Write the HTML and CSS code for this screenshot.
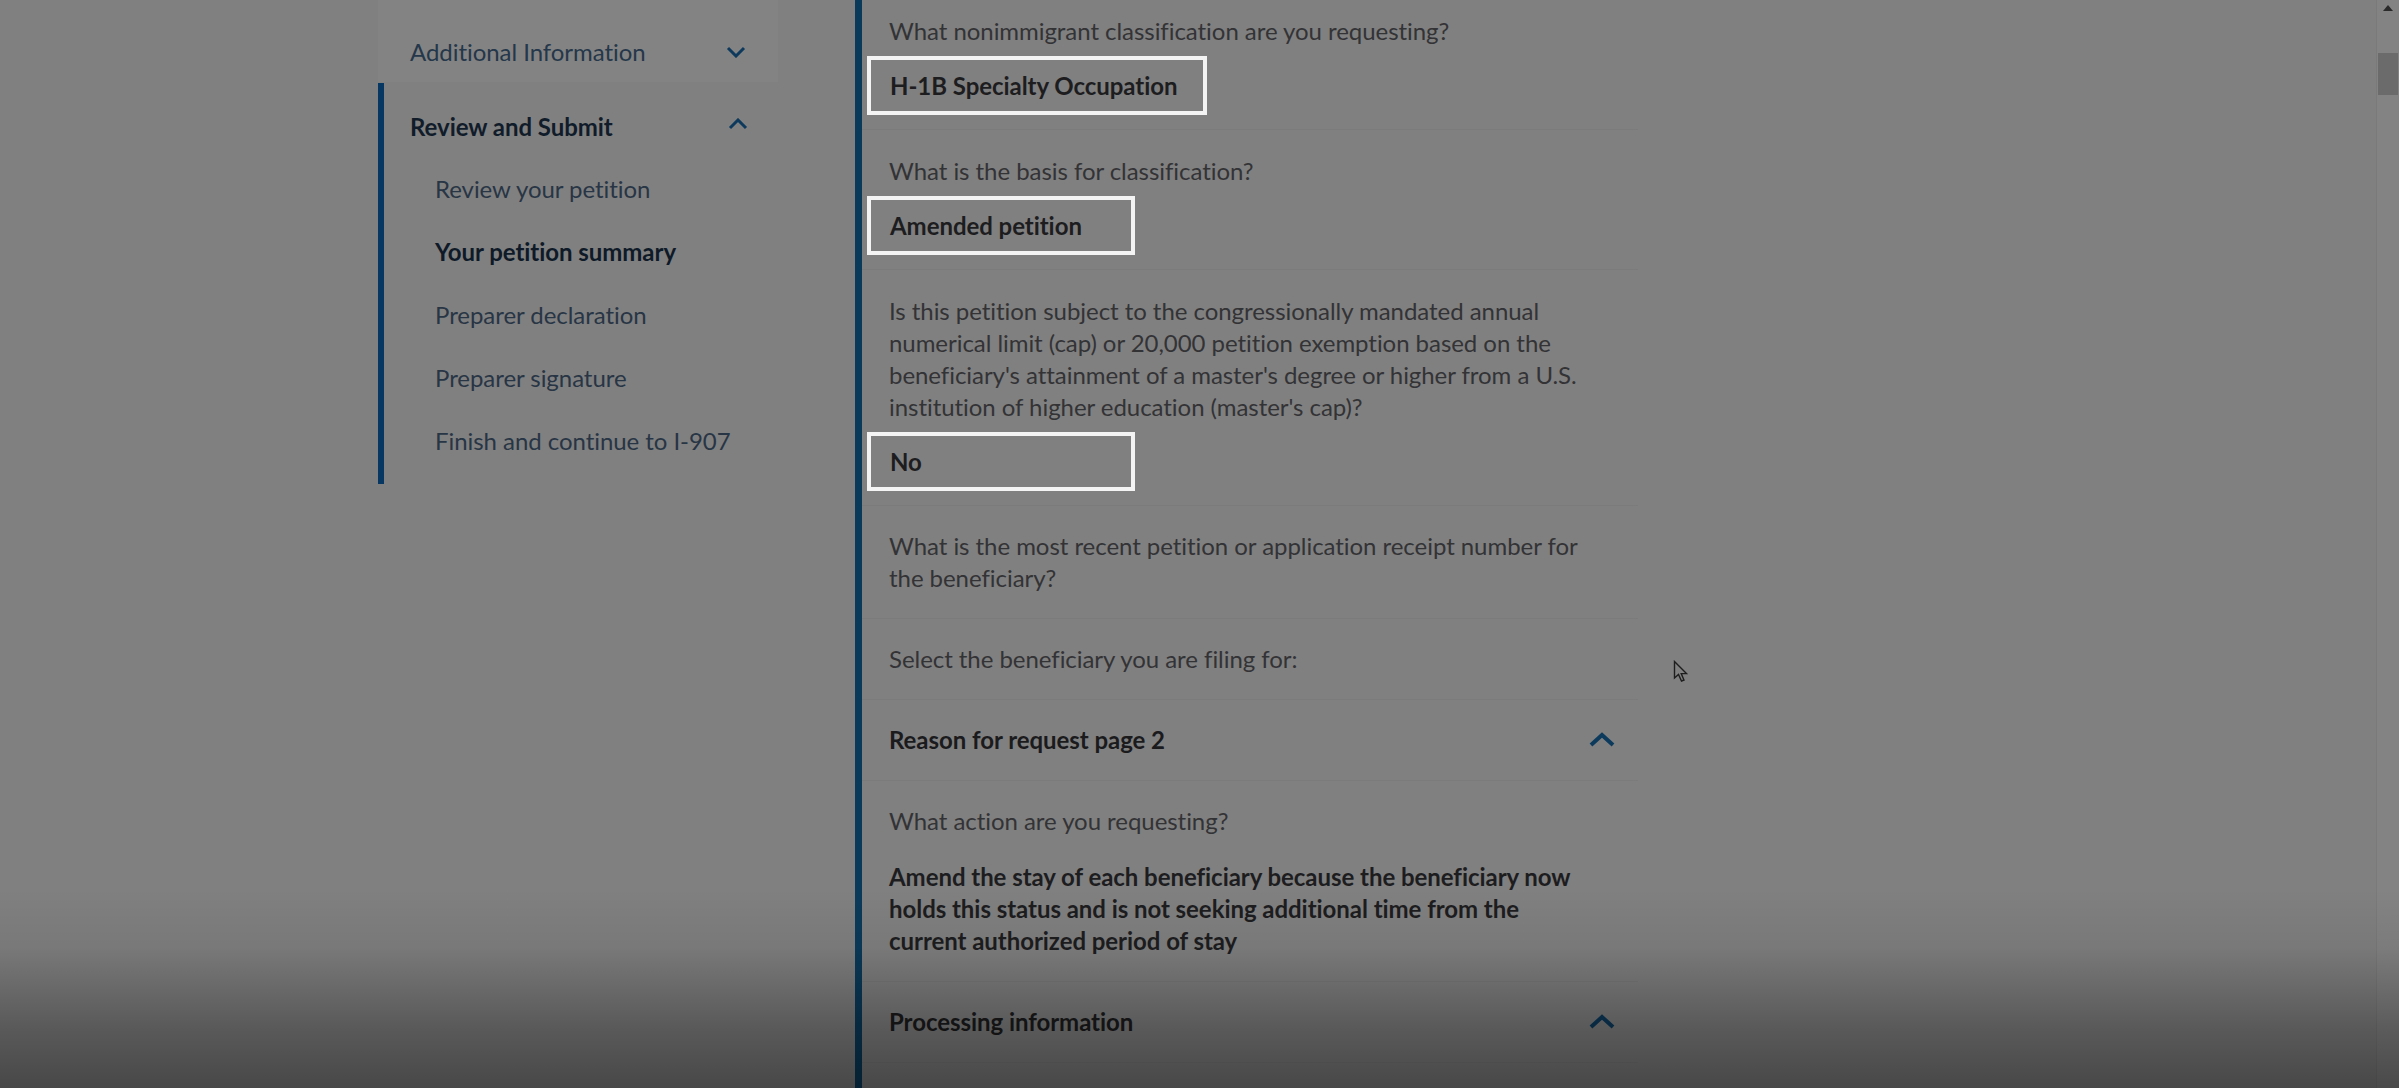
FILE: index.html
```html
<!DOCTYPE html>
<html lang="en">
<head>
    <meta charset="UTF-8">
    <meta name="viewport" content="width=device-width, initial-scale=1.0">
    <title>Your petition summary</title>
    <link rel="stylesheet" href="styles.css">
</head>
<body>
    <div class="page">
        <aside class="sidenav">
            <div class="nav-collapsed">
                <span>Additional Information</span>
                <svg class="nav-chevron" viewBox="0 0 20 12"><path d="M2 2 L10 10 L18 2"/></svg>
            </div>
            <div class="nav-open">
                <div class="nav-head">
                    <span>Review and Submit</span>
                    <svg class="nav-chevron up" viewBox="0 0 20 12"><path d="M2 10 L10 2 L18 10"/></svg>
                </div>
                <ul class="nav-items">
                    <li>Review your petition</li>
                    <li class="current">Your petition summary</li>
                    <li>Preparer declaration</li>
                    <li>Preparer signature</li>
                    <li>Finish and continue to I-907</li>
                </ul>
            </div>
        </aside>

        <main class="summary">
            <div class="field first">
                <p class="q">What nonimmigrant classification are you requesting?</p>
                <div class="answer wide">H-1B Specialty Occupation</div>
            </div>
            <div class="field">
                <p class="q">What is the basis for classification?</p>
                <div class="answer">Amended petition</div>
            </div>
            <div class="field">
                <p class="q">Is this petition subject to the congressionally mandated annual<br>numerical limit (cap) or 20,000 petition exemption based on the<br>beneficiary's attainment of a master's degree or higher from a U.S.<br>institution of higher education (master's cap)?</p>
                <div class="answer">No</div>
            </div>
            <div class="field plain">
                <p class="q">What is the most recent petition or application receipt number for<br>the beneficiary?</p>
            </div>
            <div class="field plain">
                <p class="q">Select the beneficiary you are filing for:</p>
            </div>

            <div class="section-head">
                <span>Reason for request page 2</span>
                <svg class="chevron" viewBox="0 0 28 16"><path d="M3 13 L14 3 L25 13"/></svg>
            </div>
            <div class="field plain">
                <p class="q">What action are you requesting?</p>
                <p class="value">Amend the stay of each beneficiary because the beneficiary now<br>holds this status and is not seeking additional time from the<br>current authorized period of stay</p>
            </div>

            <div class="section-head">
                <span>Processing information</span>
                <svg class="chevron" viewBox="0 0 28 16"><path d="M3 13 L14 3 L25 13"/></svg>
            </div>
        </main>
    </div>

    <!-- video overlay bits -->
    <div class="scrollbar">
        <div class="scroll-up"></div>
        <div class="scroll-thumb"></div>
    </div>
    <svg class="cursor" viewBox="0 0 16 24"><path d="M1.5 1.5 L1.5 18 L5.5 14.5 L8.5 21 L11 20 L8.2 13.6 L13.5 13.6 Z"/></svg>
    <div class="fade"></div>
</body>
</html>
```

FILE: styles.css
```css
body {
    margin: 0;
    height: 1088px;
    overflow: hidden;
    position: relative;
    background-color: #808080;
    font-family: Lato, "Open Sans", sans-serif;
    font-size: 24px;
    letter-spacing: -0.05px;
    color: #333336;
}
.page {
    display: flex;
    gap: 75px;
    padding-left: 378px;
}
/* Side navigation */
.sidenav {
    width: 402px;
    flex-shrink: 0;
}
.nav-collapsed {
    width: 400px;
    height: 82px;
    box-sizing: border-box;
    padding: 36px 32px 14px 32px;
    display: flex;
    justify-content: space-between;
    align-items: flex-start;
    line-height: 32px;
    background-color: #838383;
    color: #25374a;
}
.nav-chevron {
    width: 20px;
    height: 12px;
    margin-top: 10px;
    fill: none;
    stroke: #0d3a5c;
    stroke-width: 3;
}
.nav-chevron.up {
    margin-top: 0;
    margin-bottom: 6px;
}
.nav-open {
    margin-top: 1px;
    border-left: 6px solid #063763;
    padding-bottom: 11px;
}
.nav-head {
    display: flex;
    justify-content: space-between;
    align-items: center;
    padding: 28px 32px 15px 26px;
    line-height: 32px;
    font-weight: 700;
    color: #111c2a;
}
.nav-items {
    list-style: none;
    margin: 0;
    padding: 0;
}
.nav-items li {
    padding: 15px 0 16px 51px;
    line-height: 32px;
    color: #283545;
}
.nav-items li.current {
    font-weight: 700;
    color: #0f1a28;
}
/* Summary column */
.summary {
    width: 776px;
    flex-shrink: 0;
    border-left: 7px solid #0a3a5a;
    min-height: 1088px;
}
.field {
    padding: 25px 27px 14px;
    border-bottom: 1px solid #7b7b7b;
}
.field.first {
    padding-top: 15px;
}
.field.plain {
    padding-top: 24px;
    padding-bottom: 24px;
}
.q {
    margin: 0;
    line-height: 32px;
}
.answer {
    margin: 9px 0 0 -22px;
    width: 268px;
    height: 59px;
    box-sizing: border-box;
    border: 4px solid #f4f4f4;
    padding-left: 19px;
    display: flex;
    align-items: center;
    font-weight: 700;
    color: #1d1d1f;
}
.answer.wide {
    width: 340px;
}
.value {
    margin: 24px 0 0;
    line-height: 32px;
    font-weight: 700;
    color: #1d1d1f;
}
.section-head {
    display: flex;
    justify-content: space-between;
    align-items: center;
    padding: 24px 22px 24px 27px;
    line-height: 32px;
    font-weight: 700;
    color: #1b1b1d;
    border-bottom: 1px solid #7b7b7b;
}
.chevron {
    width: 28px;
    height: 16px;
    fill: none;
    stroke: #0c3a5c;
    stroke-width: 4;
}
/* Overlays from the recording */
.scrollbar {
    position: absolute;
    top: 0;
    right: 0;
    width: 22px;
    height: 1088px;
    background-color: #838383;
    border-left: 1px solid #7a7a7a;
}
.scroll-up {
    margin: 5px auto 0;
    width: 0;
    height: 0;
    border-left: 5px solid transparent;
    border-right: 5px solid transparent;
    border-bottom: 6px solid #2a2a2a;
}
.scroll-thumb {
    margin: 42px 0 0 1px;
    width: 20px;
    height: 42px;
    background-color: #6b6b6b;
}
.cursor {
    position: absolute;
    left: 1673px;
    top: 660px;
    width: 16px;
    height: 24px;
    fill: none;
    stroke: #1e1e1e;
    stroke-width: 1.4;
}
.fade {
    position: absolute;
    left: 0;
    right: 0;
    bottom: 0;
    height: 200px;
    background: linear-gradient(to bottom, rgba(0, 0, 0, 0) 0%, rgba(0, 0, 0, 0.06) 30%, rgba(0, 0, 0, 0.3) 70%, rgba(0, 0, 0, 0.44) 100%);
    pointer-events: none;
}
```
